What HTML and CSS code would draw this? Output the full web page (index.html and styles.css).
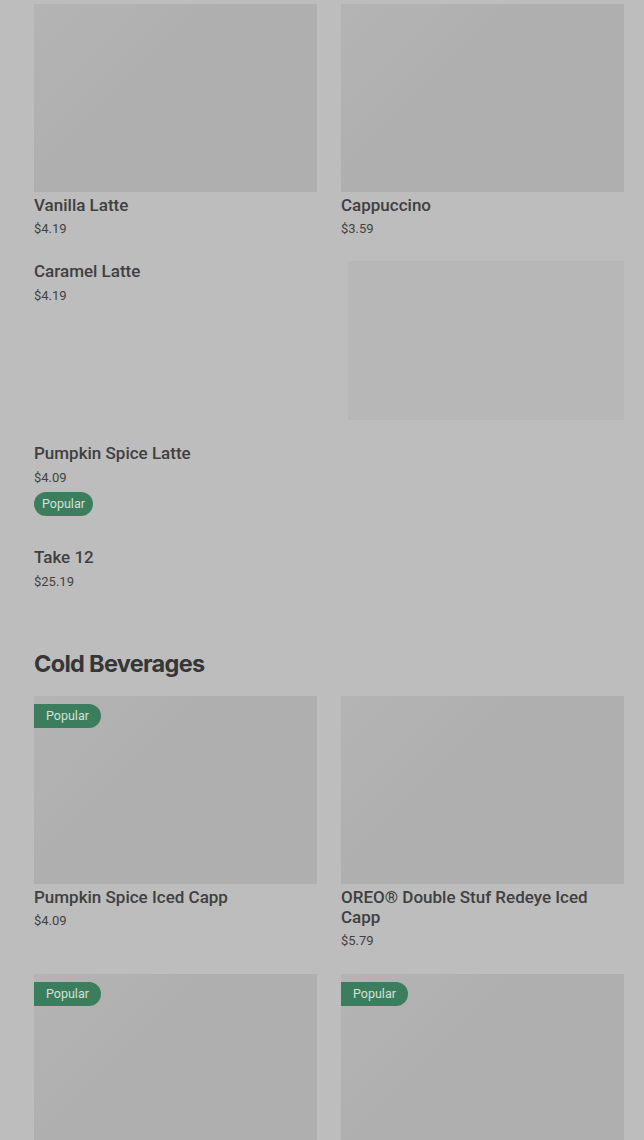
FILE: index.html
```html
<!DOCTYPE html>
<html lang="en">
<head>
  <meta charset="UTF-8">
  <meta name="viewport" content="width=device-width, initial-scale=1.0">
  <title>Menu</title>
  <link rel="stylesheet" href="styles.css">
</head>
<body>
  <div class="page">
    <section class="menu-section">
      <div class="grid tight">
        <div class="card">
          <div class="thumb"></div>
          <div class="name">Vanilla Latte</div>
          <div class="price">$4.19</div>
        </div>
        <div class="card">
          <div class="thumb"></div>
          <div class="name">Cappuccino</div>
          <div class="price">$3.59</div>
        </div>
        <div class="card text-only">
          <div class="name">Caramel Latte</div>
          <div class="price">$4.19</div>
        </div>
        <div class="loading-thumb"></div>
        <div class="card text-only wide">
          <div class="name">Pumpkin Spice Latte</div>
          <div class="price">$4.09</div>
          <span class="pill">Popular</span>
        </div>
        <div class="card text-only wide">
          <div class="name">Take 12</div>
          <div class="price">$25.19</div>
        </div>
      </div>
    </section>

    <section class="menu-section">
      <h2 class="section-title">Cold Beverages</h2>
      <div class="grid">
        <div class="card">
          <div class="thumb"><span class="pill tag">Popular</span></div>
          <div class="name">Pumpkin Spice Iced Capp</div>
          <div class="price">$4.09</div>
        </div>
        <div class="card">
          <div class="thumb"></div>
          <div class="name">OREO® Double Stuf Redeye Iced Capp</div>
          <div class="price">$5.79</div>
        </div>
        <div class="card">
          <div class="thumb"><span class="pill tag">Popular</span></div>
        </div>
        <div class="card">
          <div class="thumb"><span class="pill tag">Popular</span></div>
        </div>
      </div>
    </section>
  </div>
</body>
</html>
```

FILE: styles.css
```css
body {
  margin: 0;
  background: #bdbdbd;
  font-family: Roboto, "Liberation Sans", sans-serif;
  color: #3c3c3c;
  overflow: hidden;
}
.page {
  padding: 4px 20px 40px 34px;
}
.grid {
  display: grid;
  grid-template-columns: 283px 283px;
  column-gap: 24px;
  row-gap: 24px;
}
.grid.tight {
  row-gap: 23px;
}
.card {
  display: flex;
  flex-direction: column;
  align-items: flex-start;
}
.thumb {
  position: relative;
  width: 100%;
  height: 188px;
  background: linear-gradient(135deg, #b4b4b4 0%, #afafaf 40%, #afafaf 100%);
}
.loading-thumb {
  margin-left: 7px;
  height: 159px;
  background: #b7b7b7;
}
.name {
  margin-top: 3px;
  font-size: 17px;
  line-height: 20px;
  font-weight: 500;
  color: #404040;
}
.price {
  margin-top: 5px;
  font-size: 13px;
  line-height: 18px;
  color: #424242;
}
.text-only .name {
  margin-top: 0;
}
.text-only .price {
  margin-top: 6px;
}
.text-only {
  padding-bottom: 8px;
}
.wide {
  grid-column: 1 / span 2;
}
.pill {
  display: inline-block;
  margin-top: 5px;
  padding: 0 8px;
  height: 24px;
  line-height: 24px;
  border-radius: 12px;
  background: #3c7d5d;
  color: #d3e2d9;
  font-size: 12.5px;
}
.tag {
  position: absolute;
  top: 8px;
  left: 0;
  margin: 0;
  padding: 0 12px;
  border-radius: 0 12px 12px 0;
}
.section-title {
  margin: 51px 0 18px;
  font-family: Inter, "Liberation Sans", sans-serif;
  font-size: 23.5px;
  line-height: 28px;
  font-weight: 700;
  letter-spacing: -0.7px;
  color: #363636;
}
```
